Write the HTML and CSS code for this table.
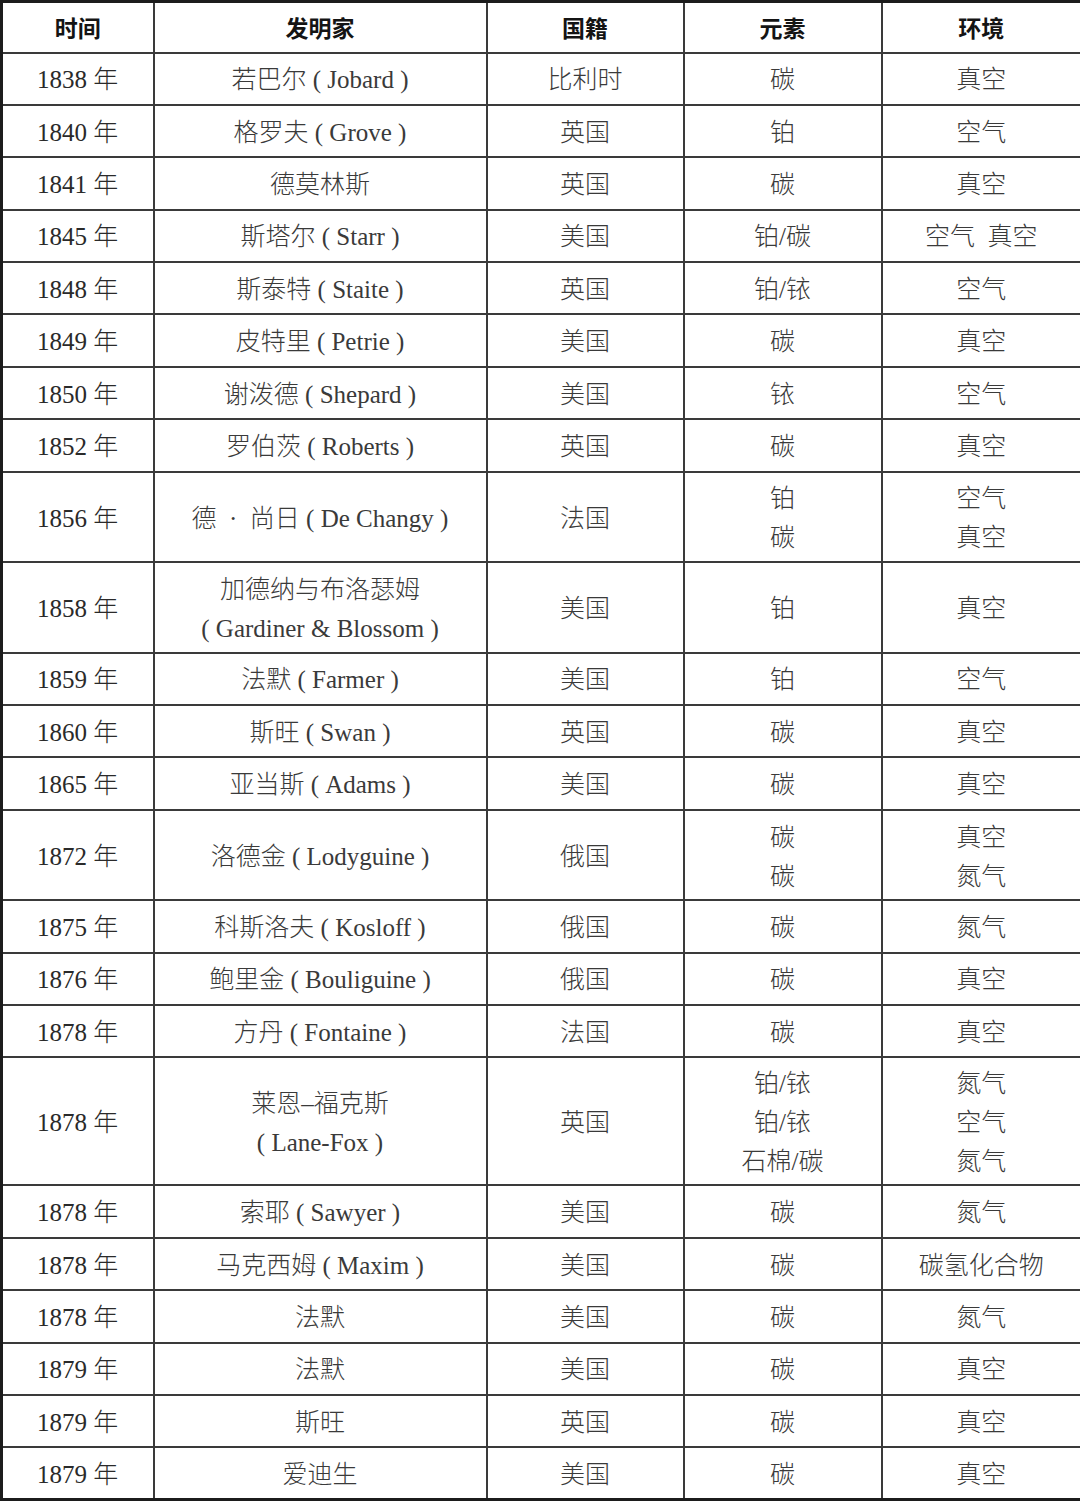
FILE: index.html
```html
<!DOCTYPE html>
<html lang="zh-CN">
<head>
<meta charset="utf-8">
<title>早期白炽灯发明家</title>
<link rel="stylesheet" href="styles.css">
</head>
<body>
<table class="data-table">
  <colgroup>
    <col class="c-time"><col class="c-name"><col class="c-nation"><col class="c-elem"><col class="c-env">
  </colgroup>
  <thead>
    <tr class="head"><th>时间</th><th>发明家</th><th>国籍</th><th>元素</th><th>环境</th></tr>
  </thead>
  <tbody>
    <tr class="r1"><td>1838 年</td><td>若巴尔&nbsp;( Jobard )</td><td>比利时</td><td>碳</td><td>真空</td></tr>
    <tr class="r1"><td>1840 年</td><td>格罗夫&nbsp;( Grove )</td><td>英国</td><td>铂</td><td>空气</td></tr>
    <tr class="r1"><td>1841 年</td><td>德莫林斯</td><td>英国</td><td>碳</td><td>真空</td></tr>
    <tr class="r1"><td>1845 年</td><td>斯塔尔&nbsp;( Starr )</td><td>美国</td><td>铂/碳</td><td>空气&nbsp;&nbsp;真空</td></tr>
    <tr class="r1"><td>1848 年</td><td>斯泰特&nbsp;( Staite )</td><td>英国</td><td>铂/铱</td><td>空气</td></tr>
    <tr class="r1"><td>1849 年</td><td>皮特里&nbsp;( Petrie )</td><td>美国</td><td>碳</td><td>真空</td></tr>
    <tr class="r1"><td>1850 年</td><td>谢泼德&nbsp;( Shepard )</td><td>美国</td><td>铱</td><td>空气</td></tr>
    <tr class="r1"><td>1852 年</td><td>罗伯茨&nbsp;( Roberts )</td><td>英国</td><td>碳</td><td>真空</td></tr>
    <tr class="r2"><td>1856 年</td><td>德&nbsp;&nbsp;·&nbsp;&nbsp;尚日&nbsp;( De Changy )</td><td>法国</td><td>铂<br>碳</td><td>空气<br>真空</td></tr>
    <tr class="r2"><td>1858 年</td><td>加德纳与布洛瑟姆<br>( Gardiner &amp; Blossom )</td><td>美国</td><td>铂</td><td>真空</td></tr>
    <tr class="r1"><td>1859 年</td><td>法默&nbsp;( Farmer )</td><td>美国</td><td>铂</td><td>空气</td></tr>
    <tr class="r1"><td>1860 年</td><td>斯旺&nbsp;( Swan )</td><td>英国</td><td>碳</td><td>真空</td></tr>
    <tr class="r1"><td>1865 年</td><td>亚当斯&nbsp;( Adams )</td><td>美国</td><td>碳</td><td>真空</td></tr>
    <tr class="r2"><td>1872 年</td><td>洛德金&nbsp;( Lodyguine )</td><td>俄国</td><td>碳<br>碳</td><td>真空<br>氮气</td></tr>
    <tr class="r1"><td>1875 年</td><td>科斯洛夫&nbsp;( Kosloff )</td><td>俄国</td><td>碳</td><td>氮气</td></tr>
    <tr class="r1"><td>1876 年</td><td>鲍里金&nbsp;( Bouliguine )</td><td>俄国</td><td>碳</td><td>真空</td></tr>
    <tr class="r1"><td>1878 年</td><td>方丹&nbsp;( Fontaine )</td><td>法国</td><td>碳</td><td>真空</td></tr>
    <tr class="r3"><td>1878 年</td><td>莱恩–福克斯<br>( Lane-Fox )</td><td>英国</td><td>铂/铱<br>铂/铱<br>石棉/碳</td><td>氮气<br>空气<br>氮气</td></tr>
    <tr class="r1"><td>1878 年</td><td>索耶&nbsp;( Sawyer )</td><td>美国</td><td>碳</td><td>氮气</td></tr>
    <tr class="r1"><td>1878 年</td><td>马克西姆&nbsp;( Maxim )</td><td>美国</td><td>碳</td><td>碳氢化合物</td></tr>
    <tr class="r1"><td>1878 年</td><td>法默</td><td>美国</td><td>碳</td><td>氮气</td></tr>
    <tr class="r1"><td>1879 年</td><td>法默</td><td>美国</td><td>碳</td><td>真空</td></tr>
    <tr class="r1"><td>1879 年</td><td>斯旺</td><td>英国</td><td>碳</td><td>真空</td></tr>
    <tr class="r1"><td>1879 年</td><td>爱迪生</td><td>美国</td><td>碳</td><td>真空</td></tr>
  </tbody>
</table>
</body>
</html>
```
FILE: styles.css
```css
html, body {
  margin: 0;
  padding: 0;
  background: #ffffff;
}

.data-table {
  width: 1080px;
  border-collapse: collapse;
  table-layout: fixed;
  border: 3px solid #1c1c1c;
  font-family: "Liberation Serif", "Noto Sans CJK SC", serif;
  font-size: 25px;
  color: #3a3a3a;
}

.c-time { width: 152px; }
.c-name { width: 333px; }
.c-nation { width: 197px; }
.c-elem { width: 198px; }
.c-env { width: 200px; }

.data-table th,
.data-table td {
  border: 2px solid #3a3a3a;
  text-align: center;
  vertical-align: middle;
  padding: 0;
  font-weight: 300;
}

.data-table td {
  padding-top: 3px;
}

.data-table th {
  font-family: "Noto Sans CJK SC", sans-serif;
  font-weight: 700;
  font-size: 23px;
  color: #141414;
}

.head { height: 51px; }
.r1 { height: 52.4px; }
.r2 { height: 90.5px; }
.r3 { height: 128px; }

.r1 td { line-height: 30px; }
.r2 td, .r3 td { line-height: 39px; }

.data-table td:first-child {
  color: #2a2a2a;
}
```
